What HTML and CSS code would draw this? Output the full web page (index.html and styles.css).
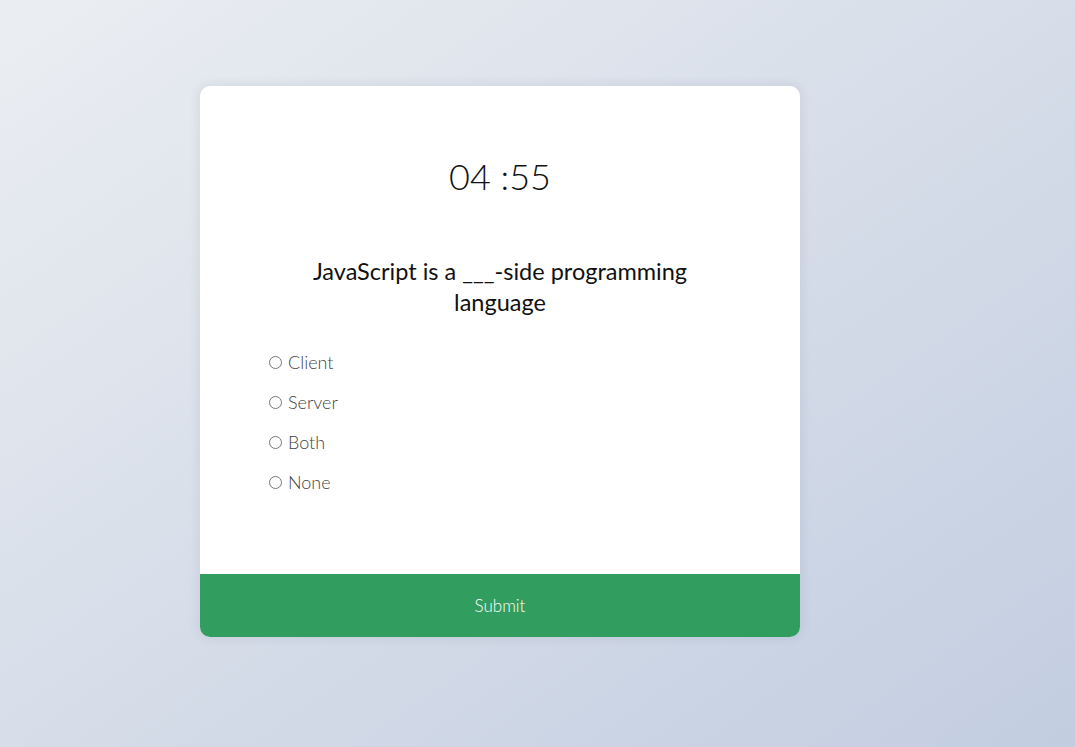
FILE: index.html
```html
<!DOCTYPE html>
<html lang="en">
<head>
<meta charset="utf-8">
<title>Quiz</title>
<link rel="stylesheet" href="styles.css">
</head>
<body>
  <div class="quiz">
    <div class="quiz-body">
      <div class="timer">04 :55</div>
      <h2 class="question">JavaScript is a ___-side programming language</h2>
      <ul class="answers">
        <li><label><input type="radio" name="answer"> <span>Client</span></label></li>
        <li><label><input type="radio" name="answer"> <span>Server</span></label></li>
        <li><label><input type="radio" name="answer"> <span>Both</span></label></li>
        <li><label><input type="radio" name="answer"> <span>None</span></label></li>
      </ul>
    </div>
    <button class="submit">Submit</button>
  </div>
</body>
</html>
```
FILE: styles.css
```css
* { box-sizing: border-box; }
html, body { height: 100%; }
body {
  margin: 0;
  font-family: "Lato", "Open Sans", sans-serif;
  background: linear-gradient(to bottom right, #ebeef2, #c2cde0);
  padding: 86px 0 0 200px;
}
.quiz {
  width: 600px;
  background: #fff;
  border-radius: 10px;
  box-shadow: 0 0 10px 2px rgba(100, 110, 130, 0.12);
  overflow: hidden;
}
.quiz-body {
  padding: 66px 0 72px;
}
.timer {
  text-align: center;
  font-size: 36px;
  line-height: 48px;
  font-weight: 300;
  color: #111;
}
.question {
  margin: 56px auto 24px;
  max-width: 380px;
  text-align: center;
  font-size: 23.5px;
  line-height: 31px;
  font-weight: 400;
  color: #111;
}
.answers {
  list-style: none;
  margin: 0;
  padding: 0 0 0 69px;
}
.answers li {
  height: 40px;
  display: flex;
  align-items: center;
}
.answers label {
  display: flex;
  align-items: center;
  font-size: 18px;
  font-weight: 300;
  color: #444;
  cursor: pointer;
}
.answers input {
  margin: 0 6px 0 0;
  width: 13px;
  height: 13px;
}
.submit {
  display: block;
  width: 100%;
  height: 63px;
  border: none;
  background: #319e5f;
  color: #fff;
  font-family: inherit;
  font-size: 17px;
  font-weight: 300;
  cursor: pointer;
}
```
